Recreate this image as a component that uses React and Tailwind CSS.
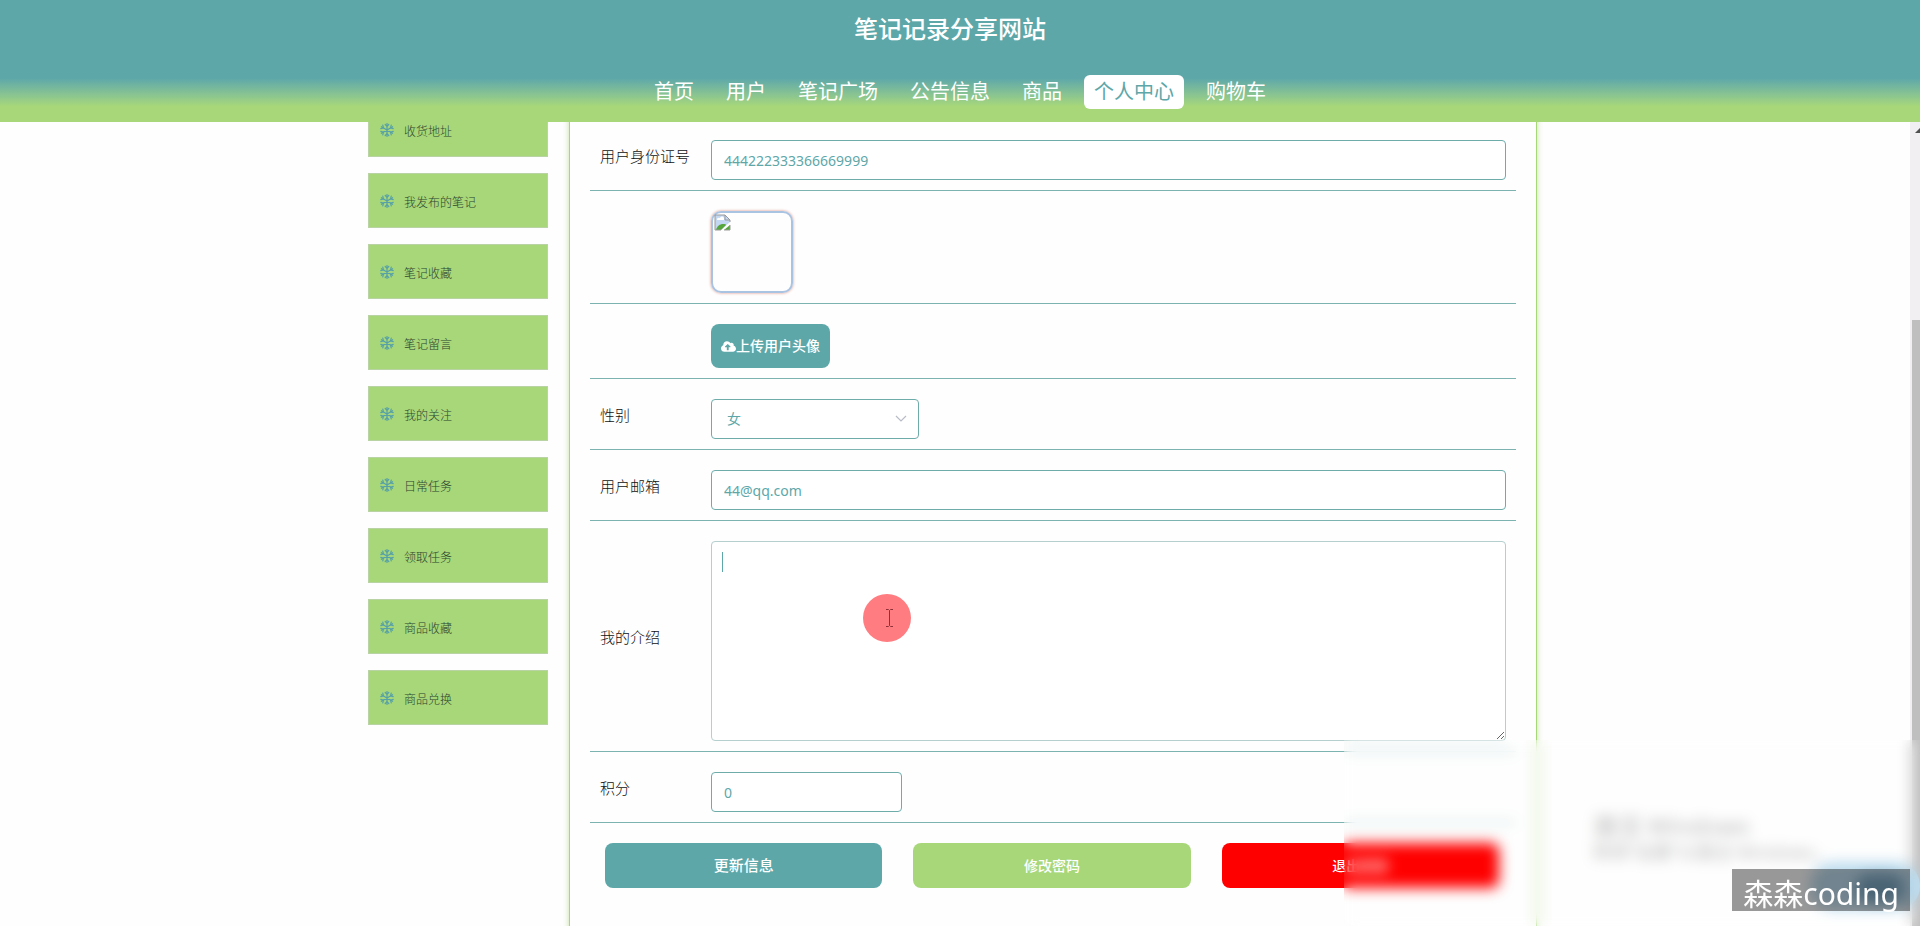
import React from "react";
import { FaCloudUploadAlt } from "react-icons/fa";

const navItems = ["首页", "用户", "笔记广场", "公告信息", "商品", "个人中心", "购物车"];
const activeNav = "个人中心";

const sideItems = [
  "收货地址",
  "我发布的笔记",
  "笔记收藏",
  "笔记留言",
  "我的关注",
  "日常任务",
  "领取任务",
  "商品收藏",
  "商品兑换",
];

const field =
  "block h-10 rounded border border-[#6eacaa] bg-white px-3 text-sm text-[#5da7a9] outline-none";

function Header() {
  return (
    <header className="relative z-10 shrink-0 bg-linear-to-b from-[#5da7a9] from-64% to-[#a7d779] to-87% pt-[11px] pb-[13px] text-white">
      <h1 className="pr-5 text-center text-2xl leading-9 font-medium">笔记记录分享网站</h1>
      <nav className="mt-7 flex justify-center gap-3 text-xl">
        {navItems.map((item) => (
          <a
            key={item}
            href="#"
            className={
              item === activeNav
                ? "rounded-md bg-white px-[10px] leading-[34px] text-[#5da7a9]"
                : "px-[10px] leading-[34px]"
            }
          >
            {item}
          </a>
        ))}
      </nav>
    </header>
  );
}

function Snowflake() {
  return (
    <svg
      className="mb-1 size-[14px]"
      viewBox="0 0 14 14"
      fill="none"
      stroke="#56a0a8"
      strokeWidth="1.200"
      strokeLinecap="round"
      aria-hidden="true"
    >
      <path d="M7 .5v13M1.400 3.700l11.200 6.600M1.400 10.300l11.200-6.600" />
      <path d="M5.200 1.500L7 3.200l1.800-1.700M5.200 12.500L7 10.800l1.800 1.700M.8 5.600l2.600-.8-.6-2.600M13.200 5.600l-2.600-.8.6-2.600M.8 8.400l2.600.8-.6 2.600M13.200 8.400l-2.600.8.6 2.600" />
    </svg>
  );
}

function Sidebar() {
  return (
    <ul className="flex w-[180px] shrink-0 flex-col gap-4">
      {sideItems.map((item) => (
        <li key={item}>
          <a
            href="#"
            className="flex h-[55px] items-center gap-[10px] border border-[#b9d3a4] bg-[#a7d779] px-[11px] pt-1 text-xs font-light text-[#2c452e]"
          >
            <Snowflake />
            {item}
          </a>
        </li>
      ))}
    </ul>
  );
}

function Row({ label, htmlFor, children }) {
  return (
    <div className="flex items-center border-b border-[#7cb2b0] px-[10px] pt-5 pb-[10px]">
      <div className="w-[111px] shrink-0 pb-2 text-[15px] font-light text-[#111]">
        {label && <label htmlFor={htmlFor}>{label}</label>}
      </div>
      <div className="min-w-0 flex-1">{children}</div>
    </div>
  );
}

function BrokenImage() {
  return (
    <svg width="17" height="17" viewBox="0 0 17 17" aria-hidden="true">
      <path d="M1 1h10l5 5v2L7 16H1z" fill="#c3d6f2" />
      <path d="M3 6a2 2 0 0 1 3-2 2 2 0 0 1 4 1v1H3z" fill="#fff" />
      <path d="M2 16c1-4 4-6 7-6 2 0 3 0 3 1l-5 5z" fill="#57a63d" />
      <path d="M10 16h6v-5z" fill="#57a63d" />
      <path d="M1 16V1h10l5 5v2M1 16h6M11 1v5h5M16 11v5h-6" fill="none" stroke="#9a9a9a" />
    </svg>
  );
}

function ProfileForm() {
  return (
    <form className="min-w-0 flex-1 border border-[#a7d779] px-5 pt-[17px] pb-28 shadow-[0_0_6px_#c3dfa0]">
      <Row label="用户身份证号" htmlFor="idcard">
        <input id="idcard" className={`${field} w-full`} defaultValue="444222333366669999" />
      </Row>
      <Row>
        <div className="h-[82px] w-[82px] rounded-[10px] border-2 border-[#a9c3e3] p-px shadow-[0_0_3px_#d98f80]">
          <BrokenImage />
        </div>
      </Row>
      <Row>
        <button
          type="button"
          className="flex h-11 items-center rounded-lg bg-[#5da7a9] px-[10px] text-sm font-medium text-white"
        >
          <FaCloudUploadAlt className="size-[15px]" />
          上传用户头像
        </button>
      </Row>
      <Row label="性别" htmlFor="gender">
        <div className="relative w-[208px]">
          <select id="gender" defaultValue="女" className={`${field} w-full appearance-none pl-[15px]`}>
            <option>男</option>
            <option>女</option>
          </select>
          <svg
            className="pointer-events-none absolute top-4 right-3"
            width="12"
            height="8"
            viewBox="0 0 12 8"
            fill="none"
            stroke="#b8bcc6"
            strokeWidth="1.2"
            aria-hidden="true"
          >
            <path d="M1 1l5 5 5-5" />
          </svg>
        </div>
      </Row>
      <Row label="用户邮箱" htmlFor="email">
        <input id="email" className={`${field} w-full`} defaultValue="44@qq.com" />
      </Row>
      <Row label="我的介绍" htmlFor="intro">
        <div className="relative">
          <textarea
            id="intro"
            className="block h-[200px] w-full resize rounded border border-[#b4cfcd] bg-white px-3 py-2 text-sm text-[#5da7a9] outline-none"
          />
          <span className="absolute top-[11px] left-[11px] h-5 w-px bg-[#5da7a9]" />
          <span className="absolute top-[53px] left-[152px] flex size-12 items-center justify-center rounded-full bg-[#ff7c80] pl-1">
            <svg width="9" height="18" viewBox="0 0 9 18" fill="none" stroke="#8f3038" aria-hidden="true">
              <path d="M1 .5h2.500l1 1 1-1H8M4.500 1.500v15M1 17.500h2.500l1-1 1 1H8" />
            </svg>
          </span>
        </div>
      </Row>
      <Row label="积分" htmlFor="points">
        <input id="points" className={`${field} w-[191px]`} defaultValue="0" />
      </Row>
      <div className="grid grid-cols-3 gap-[31px] pt-5 pr-[17px] pl-[15px] font-medium text-white">
        <button type="button" className="h-[45px] rounded-lg bg-[#5da7a9] text-[15px]">
          更新信息
        </button>
        <button type="button" className="h-[45px] rounded-lg bg-[#a7d779] text-sm">
          修改密码
        </button>
        <button type="button" className="h-[45px] rounded-lg bg-[#ff0000] text-sm">
          退出登录
        </button>
      </div>
    </form>
  );
}

function Scrollbar() {
  return (
    <div className="flex w-[10px] shrink-0 flex-col items-end bg-[#f1eff1]">
      <svg className="mt-1.5 shrink-0" width="5" height="5" viewBox="0 0 5 5" aria-hidden="true">
        <path d="M0 5L5 0v5z" fill="#505050" />
      </svg>
      <div className="mt-[187px] w-2 flex-1 bg-[#bfbfbf]" />
    </div>
  );
}

function Overlays() {
  return (
    <div className="pointer-events-none absolute right-0 bottom-0 z-20 h-[186px] w-[576px] overflow-hidden">
      <div className="absolute top-[72px] left-[249px] text-[#b8b8b8]">
        <p className="text-2xl leading-7">激活 Windows</p>
        <p className="text-lg leading-6">转到“设置”以激活 Windows。</p>
      </div>
      <div className="absolute right-0 bottom-4 h-12 w-[110px] rounded-full bg-[#bddcee]" />
      <div className="absolute right-4 bottom-6 h-7 w-12 rounded-full bg-[#7ba6c2]" />
      <div className="absolute inset-0 backdrop-blur-[7px]" />
      <div className="absolute right-[10px] bottom-[15px] flex h-[42px] items-center bg-black/40 px-[11px] pt-[7px] text-3xl text-white">
        森森coding
      </div>
    </div>
  );
}

export default function App() {
  return (
    <div className="relative flex h-screen flex-col overflow-hidden bg-[#fefefe] font-['Noto_Sans','Noto_Sans_CJK_SC',sans-serif]">
      <Header />
      <main className="flex min-h-0 flex-1">
        <div className="min-w-0 flex-1 overflow-hidden pr-[5px]">
          <div className="mx-auto -mt-5 flex max-w-[1169px] items-start gap-[21px]">
            <Sidebar />
            <ProfileForm />
          </div>
        </div>
        <Scrollbar />
      </main>
      <Overlays />
    </div>
  );
}
